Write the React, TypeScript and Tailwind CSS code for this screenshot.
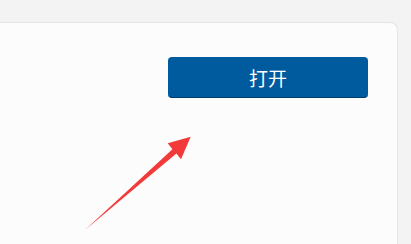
import React from "react";

export default function App() {
  return (
    <div className="relative w-[411px] h-[244px] overflow-hidden bg-[#f3f3f3] pt-[22px] pr-[13px]" style={{ fontFamily: '"Noto Sans CJK SC", "Noto Sans", sans-serif' }}>
      <div className="h-full bg-[#fcfcfc] border-t border-r border-[#e5e5e5] rounded-tr-[8px] flex justify-end pt-[34px] pr-[29px]">
        <button className="w-[200px] h-[41px] rounded-[4px] bg-[#005a9e] border-b border-[#003e6e] text-white text-[19px] leading-none flex items-center justify-center">
          打开
        </button>
      </div>
      <svg className="absolute left-0 top-0 pointer-events-none" width="411" height="244" viewBox="0 0 411 244">
        <polygon
          points="85,230 172.4,149.2 167.7,143.3 190.7,136.7 181,159.3 176.4,153.6"
          fill="#f23a3a"
        />
      </svg>
    </div>
  );
}
